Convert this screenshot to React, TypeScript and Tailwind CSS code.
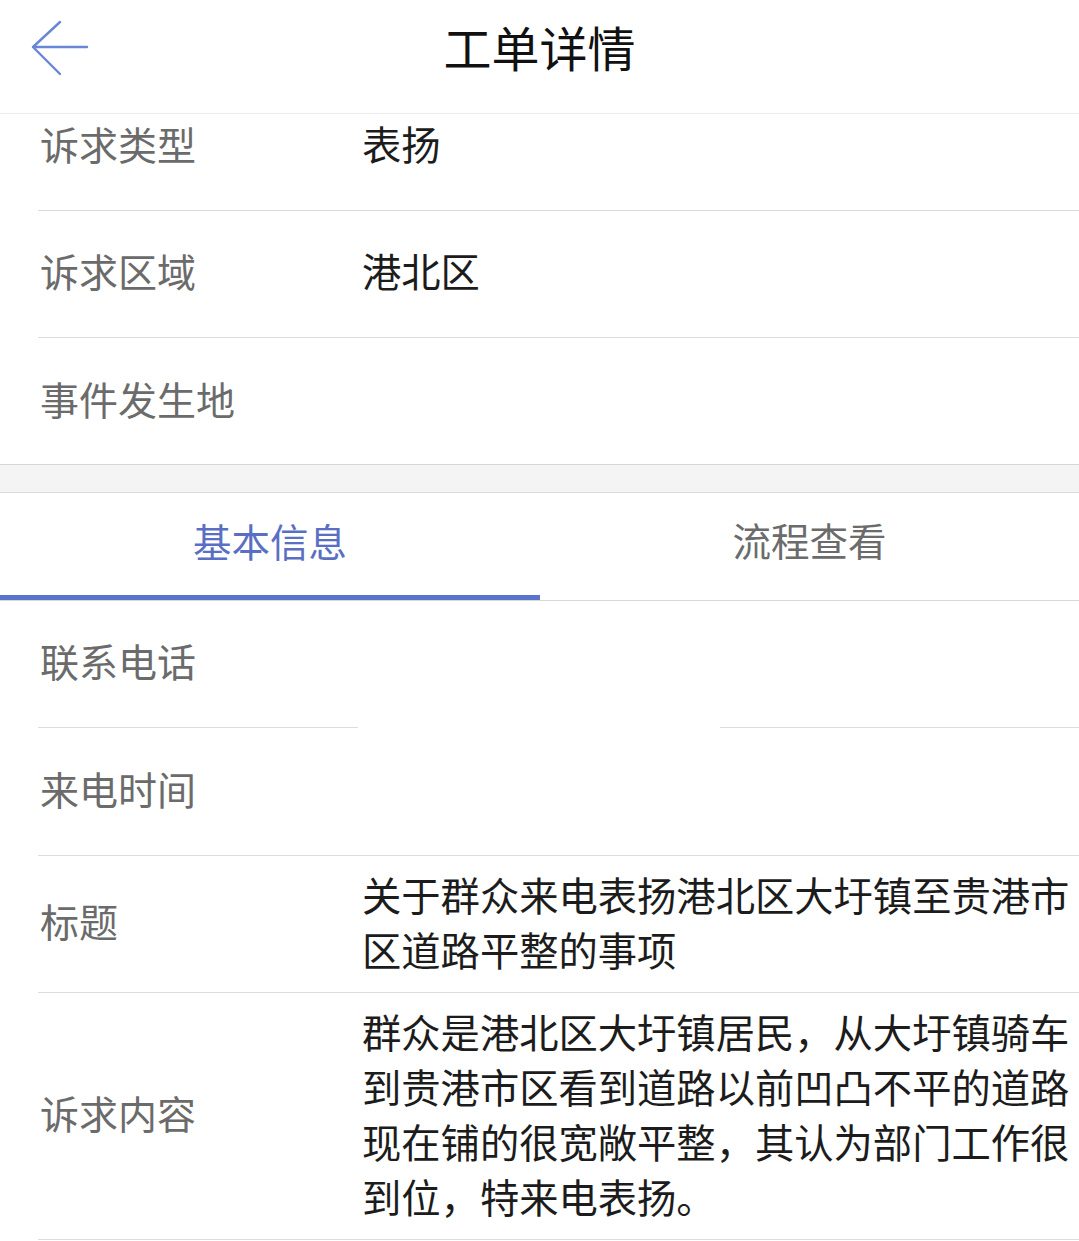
import React from 'react';

const font = { fontFamily: '"Noto Sans CJK SC", "Noto Sans", sans-serif' };

interface RowProps {
  label: string;
  value?: React.ReactNode;
  className?: string;
  valueClass?: string;
  multi?: boolean;
}

const Row: React.FC<RowProps> = ({ label, value, className = '', valueClass = '', multi }) => (
  <div className={`ml-[38px] flex border-b border-[#dcdcdc] ${className}`}>
    <div className="flex w-[324px] shrink-0 items-center pb-[7px] pl-[2px] text-[39px] text-[#6b6b6b]">{label}</div>
    <div
      className={`flex w-[714px] text-[39.3px] text-[#1c1c1c] ${multi ? 'items-start leading-[55px]' : 'items-center pb-[7px]'} ${valueClass}`}
    >
      {value}
    </div>
  </div>
);

const App: React.FC = () => {
  return (
    <div className="min-h-[1241px] w-[1079px] overflow-hidden bg-white" style={font}>
      <div className="relative flex h-[114px] items-center justify-center border-b border-[#ececec]">
        <svg className="absolute left-[30px] top-[19px]" width="62" height="60" viewBox="0 0 62 60" fill="none">
          <path d="M3 28 H57 M3 28 L30 3 M3 28 L30 55" stroke="#6a86d6" strokeWidth="2.4" strokeLinecap="round" />
        </svg>
        <span className="pb-[22px] text-[48px] text-[#111]">工单详情</span>
      </div>

      <Row label="诉求类型" value="表扬" className="h-[97px] pb-[30px]" />
      <Row label="诉求区域" value="港北区" className="h-[127px]" />
      <div className="border-b border-[#d6d6d6]">
        <div className="ml-[38px] flex h-[126px] items-center pb-[6px] pl-[2px] text-[39px] text-[#6b6b6b]">事件发生地</div>
      </div>

      <div className="h-[28px] border-b border-[#dcdcdc] bg-[#f4f4f4]" />

      <div className="flex h-[108px] border-b border-[#d8d8d8]">
        <div className="flex w-[540px] flex-col">
          <div className="flex flex-1 items-center justify-center pb-[6px] text-[38.5px] text-[#5a6fc4]">基本信息</div>
          <div className="h-[5px] bg-[#5a74cc]" />
        </div>
        <div className="flex w-[539px] items-center justify-center pb-[13px] text-[38.5px] text-[#6b6b6b]">流程查看</div>
      </div>

      <div className="relative">
        <Row label="联系电话" className="h-[127px]" />
        <Row label="来电时间" className="h-[128px]" />
        <div className="absolute left-[358px] top-[4px] h-[236px] w-[362px] bg-white" />
        <Row
          multi
          label="标题"
          valueClass="pt-[10px] pb-[16px]"
          value={<span>关于群众来电表扬港北区大圩镇至贵港市区道路平整的事项</span>}
        />
        <Row
          multi
          label="诉求内容"
          valueClass="pt-[10px] pb-[16px]"
          value={<span>群众是港北区大圩镇居民，从大圩镇骑车到贵港市区看到道路以前凹凸不平的道路现在铺的很宽敞平整，其认为部门工作很到位，特来电表扬。</span>}
        />
      </div>
    </div>
  );
};

export default App;
